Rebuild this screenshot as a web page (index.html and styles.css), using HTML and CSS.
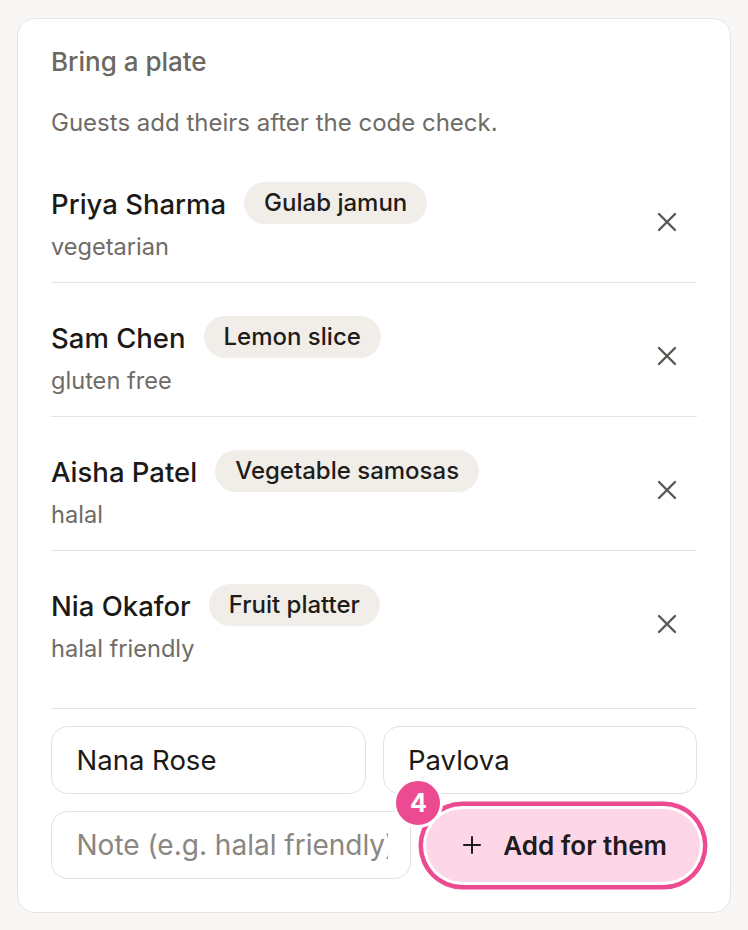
FILE: index.html
```html
<!DOCTYPE html>
<html lang="en">
<head>
<meta charset="utf-8">
<title>Bring a plate</title>
<link rel="stylesheet" href="styles.css">
</head>
<body>
<section class="card">
  <h2 class="title">Bring a plate</h2>
  <p class="subtitle">Guests add theirs after the code check.</p>
  <ul class="list">
    <li class="row">
      <div class="info">
        <div class="line"><span class="name">Priya Sharma</span><span class="chip">Gulab jamun</span></div>
        <div class="note">vegetarian</div>
      </div>
      <button class="remove" aria-label="Remove"><svg viewBox="0 0 20 20" width="20" height="20"><path d="M2 2L18 18M18 2L2 18" stroke="#5a5753" stroke-width="2.4" stroke-linecap="round"/></svg></button>
    </li>
    <li class="row">
      <div class="info">
        <div class="line"><span class="name">Sam Chen</span><span class="chip">Lemon slice</span></div>
        <div class="note">gluten free</div>
      </div>
      <button class="remove" aria-label="Remove"><svg viewBox="0 0 20 20" width="20" height="20"><path d="M2 2L18 18M18 2L2 18" stroke="#5a5753" stroke-width="2.4" stroke-linecap="round"/></svg></button>
    </li>
    <li class="row">
      <div class="info">
        <div class="line"><span class="name">Aisha Patel</span><span class="chip">Vegetable samosas</span></div>
        <div class="note">halal</div>
      </div>
      <button class="remove" aria-label="Remove"><svg viewBox="0 0 20 20" width="20" height="20"><path d="M2 2L18 18M18 2L2 18" stroke="#5a5753" stroke-width="2.4" stroke-linecap="round"/></svg></button>
    </li>
    <li class="row">
      <div class="info">
        <div class="line"><span class="name">Nia Okafor</span><span class="chip">Fruit platter</span></div>
        <div class="note">halal friendly</div>
      </div>
      <button class="remove" aria-label="Remove"><svg viewBox="0 0 20 20" width="20" height="20"><path d="M2 2L18 18M18 2L2 18" stroke="#5a5753" stroke-width="2.4" stroke-linecap="round"/></svg></button>
    </li>
  </ul>
  <form class="form">
    <div class="pair">
      <input class="field" type="text" value="Nana Rose">
      <input class="field" type="text" value="Pavlova">
    </div>
    <div class="submit-row">
      <input class="field field-note" type="text" placeholder="Note (e.g. halal friendly)">
      <button class="add" type="button">
        <span class="badge">4</span>
        <svg class="plus" viewBox="0 0 18 18" width="18" height="18"><path d="M9 1V17M1 9H17" stroke="#1f1a1d" stroke-width="2" stroke-linecap="round"/></svg>
        <span>Add for them</span>
      </button>
    </div>
  </form>
</section>
</body>
</html>
```
FILE: styles.css
```css
* { box-sizing: border-box; }
html, body { margin: 0; }
body {
  background: #f8f7f5;
  padding: 18px 17px;
  font-family: Inter, "Noto Sans", sans-serif;
  color: #1c1a17;
}
.card {
  background: #fff;
  border: 1.5px solid #e7e4df;
  border-radius: 18px;
  padding: 26.5px 33px 30px 33px;
}
.title {
  margin: 0;
  font-size: 26px;
  font-weight: 500;
  line-height: 32px;
  color: #6b6762;
}
.subtitle {
  margin: 30px 0 0;
  font-size: 24px;
  line-height: 30px;
  color: #6f6b66;
}
.list {
  list-style: none;
  margin: 11px 0 0;
  padding: 0;
}
.row {
  display: flex;
  align-items: center;
  justify-content: space-between;
  padding: 33px 0 19px;
  border-bottom: 1.5px solid #e7e4df;
}
.row:last-child { padding-bottom: 43.5px; }
.line {
  display: flex;
  align-items: center;
  gap: 18px;
}
.name {
  font-size: 27.5px;
  font-weight: 500;
  color: #1c1a17;
  position: relative;
  top: 1.5px;
}
.chip {
  display: inline-flex;
  align-items: center;
  height: 42px;
  padding: 0 20px;
  border-radius: 21px;
  background: #f1eeea;
  font-size: 24px;
  font-weight: 500;
  color: #1f1c19;
}
.note {
  margin-top: 7px;
  font-size: 23.6px;
  line-height: 32px;
  color: #6f6b66;
}
.remove {
  width: 44px;
  height: 44px;
  margin-right: 8px;
  border: 0;
  background: transparent;
  display: flex;
  align-items: center;
  justify-content: center;
  padding: 0;
}
.form {
  padding-top: 16.5px;
  display: flex;
  flex-direction: column;
  gap: 15px;
}
.pair {
  display: grid;
  grid-template-columns: 1fr 1fr;
  gap: 17px;
}
.field {
  height: 68px;
  min-width: 0;
  width: 100%;
  border: 1.5px solid #e5e2dd;
  border-radius: 17px;
  padding: 0 24.5px;
  font-family: Inter, "Noto Sans", sans-serif;
  font-size: 27.5px;
  color: #1c1a17;
  background: #fff;
  outline: none;
}
.field::placeholder { color: #8a8681; }
.submit-row {
  display: flex;
  align-items: center;
  gap: 15px;
}
.field-note { flex: 1; width: auto; font-size: 28px; padding-right: 22px; }
.add {
  position: relative;
  flex: none;
  height: 73px;
  margin-right: -3px;
  padding: 0 33px 0 37px;
  display: flex;
  align-items: center;
  gap: 22px;
  border: 0;
  border-radius: 37px;
  background: #fdd6e7;
  box-shadow: 0 0 0 3px #fff, 0 0 0 7.5px #ec4b92;
  font-family: Inter, "Noto Sans", sans-serif;
  font-size: 26px;
  font-weight: 600;
  color: #1f1a1d;
}
.badge {
  position: absolute;
  left: -33px;
  top: -30.5px;
  width: 50px;
  height: 50px;
  border-radius: 50%;
  background: #ec4b92;
  border: 3px solid #fff;
  color: #fff;
  font-size: 25px;
  font-weight: 700;
  display: flex;
  align-items: center;
  justify-content: center;
}
```
